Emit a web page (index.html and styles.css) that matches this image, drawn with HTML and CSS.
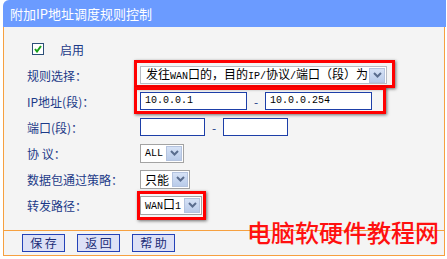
FILE: index.html
```html
<!DOCTYPE html>
<html>
<head>
<meta charset="utf-8">
<link rel="stylesheet" href="styles.css">
</head>
<body>
<div class="panel">
  <div class="hdr">附加IP地址调度规则控制</div>
  <div class="body">
    <div class="enable">
      <span class="cb"><svg width="8" height="8" viewBox="0 0 8 8"><path d="M1 4 L3 6.5 L7 1" fill="none" stroke="#1aa01a" stroke-width="2"/></svg></span>
      <span class="en-text">启用</span>
    </div>
    <div class="form">
      <div class="lbl">规则选择：</div>
      <div class="ctl">
        <div class="hl hl-rule">
          <div class="sel sel-rule"><span class="sel-text">发往<span class="mono">WAN</span>口的，目的<span class="mono">IP/</span>协议<span class="mono">/</span>端口（段）为</span><span class="arr"><svg width="9" height="6" viewBox="0 0 9 6"><path d="M1 1 L4.5 4.5 L8 1" fill="none" stroke="#5a6d8e" stroke-width="2"/></svg></span></div>
        </div>
      </div>

      <div class="lbl">IP地址(段)：</div>
      <div class="ctl">
        <div class="hl hl-ip">
          <div class="pair">
            <div class="inp inp-ip mono">10.0.0.1</div>
            <span class="dash">-</span>
            <div class="inp inp-ip mono">10.0.0.254</div>
          </div>
        </div>
      </div>

      <div class="lbl">端口(段)：</div>
      <div class="ctl">
        <div class="pair pair-port">
          <div class="inp inp-port"></div>
          <span class="dash">-</span>
          <div class="inp inp-port"></div>
        </div>
      </div>

      <div class="lbl">协 议：</div>
      <div class="ctl">
        <div class="sel sel-small"><span class="sel-text mono">ALL</span><span class="arr"><svg width="9" height="6" viewBox="0 0 9 6"><path d="M1 1 L4.5 4.5 L8 1" fill="none" stroke="#5a6d8e" stroke-width="2"/></svg></span></div>
      </div>

      <div class="lbl">数据包通过策略：</div>
      <div class="ctl">
        <div class="sel sel-small"><span class="sel-text">只能</span><span class="arr"><svg width="9" height="6" viewBox="0 0 9 6"><path d="M1 1 L4.5 4.5 L8 1" fill="none" stroke="#5a6d8e" stroke-width="2"/></svg></span></div>
      </div>

      <div class="lbl">转发路径：</div>
      <div class="ctl">
        <div class="hl hl-wan">
          <div class="sel sel-small"><span class="sel-text"><span class="mono">WAN</span>口<span class="mono">1</span></span><span class="arr"><svg width="9" height="6" viewBox="0 0 9 6"><path d="M1 1 L4.5 4.5 L8 1" fill="none" stroke="#5a6d8e" stroke-width="2"/></svg></span></div>
        </div>
      </div>
    </div>
    <div class="btns">
      <button class="btn">保 存</button>
      <button class="btn">返 回</button>
      <button class="btn">帮 助</button>
    </div>
    <div class="wm">电脑软硬件教程网</div>
  </div>
</div>
</body>
</html>
```
FILE: styles.css
```css
* { box-sizing: border-box; }
html, body { margin: 0; padding: 0; background: #ffffff; }
body {
  font-family: "Noto Sans CJK SC", sans-serif;
  font-size: 12px;
  color: #1c3a88;
}
.panel {
  width: 442px;
  margin-left: 3px;
}
.hdr {
  height: 27px;
  background: #6b9bff;
  color: #ffffff;
  font-size: 13px;
  line-height: 27px;
  padding-left: 7px;
  border-top-left-radius: 6px;
  margin-right: -1px;
}
.body {
  position: relative;
  background: #f4f4f4;
  border: 1px solid #f6a040;
  border-top: none;
  height: 229px;
  padding-top: 9px;
}
.enable {
  display: flex;
  align-items: center;
  height: 26px;
  padding-left: 28px;
}
.cb {
  width: 12px;
  height: 12px;
  border: 1px solid #2c4f78;
  background: #ffffff;
  display: flex;
  align-items: center;
  justify-content: center;
}
.en-text { margin-left: 16px; }
.form {
  display: grid;
  grid-template-columns: 113px auto;
  grid-auto-rows: 26px;
  padding-left: 23px;
}
.lbl {
  display: flex;
  align-items: center;
  white-space: nowrap;
}
.ctl {
  display: flex;
  align-items: center;
}
.hl { position: relative; }
.hl::after {
  content: "";
  position: absolute;
  border: 3px solid #ff0000;
  box-shadow: 1px 1px 3px rgba(0,0,0,0.55);
  pointer-events: none;
}
.hl-rule::after { top: -6px; bottom: -4px; left: -6px; right: -8px; }
.hl-ip::after { top: -5px; bottom: -4px; left: -6px; right: -14px; }
.hl-wan::after { top: -5px; bottom: -5px; left: -3px; right: -4px; }

.sel {
  display: flex;
  align-items: center;
  background: #ffffff;
  border: 1px solid #a3a3a3;
  color: #000000;
  height: 19px;
  padding: 1px;
}
.sel-rule { width: 247px; height: 18px; border-color: #b8bcc4; }
.sel-text {
  flex: 1;
  padding-left: 4px;
  white-space: nowrap;
  line-height: 15px;
  overflow: hidden;
}
.sel-small .sel-text { padding-left: 3px; padding-right: 3px; }
.arr {
  width: 16px;
  height: 15px;
  flex: none;
  background: linear-gradient(#d6e2f6, #b9cbe9);
  border: 1px solid #b4c3de;
  display: flex;
  align-items: center;
  justify-content: center;
}
.mono { font-family: "Liberation Mono", monospace; font-size: 10px; }
.pair { display: flex; align-items: center; }
.inp {
  background: #ffffff;
  border: 1px solid #1d3fa8;
  height: 18px;
  color: #000000;
  padding-left: 4px;
  line-height: 16px;
}
.inp-ip { width: 107px; }
.inp-port { width: 65px; }
.dash { width: 18px; text-align: center; color: #1c3a88; }
.btns {
  position: absolute;
  left: 0;
  right: 0;
  bottom: 0;
  height: 25px;
  border-top: 1px solid #f6a040;
  display: flex;
  align-items: center;
  padding-left: 18px;
  gap: 12px;
}
.btn {
  font-family: "Noto Sans CJK SC", sans-serif;
  font-size: 12px;
  color: #1a2c78;
  background: #dde1f6;
  border: 1px solid #2442b8;
  width: 43px;
  height: 18px;
  padding: 0;
  line-height: 16px;
}
.wm {
  position: absolute;
  left: 243px;
  top: 191px;
  font-size: 24px;
  font-weight: 500;
  color: #ff1010;
  letter-spacing: 0px;
  white-space: nowrap;
  line-height: 28px;
}
```
